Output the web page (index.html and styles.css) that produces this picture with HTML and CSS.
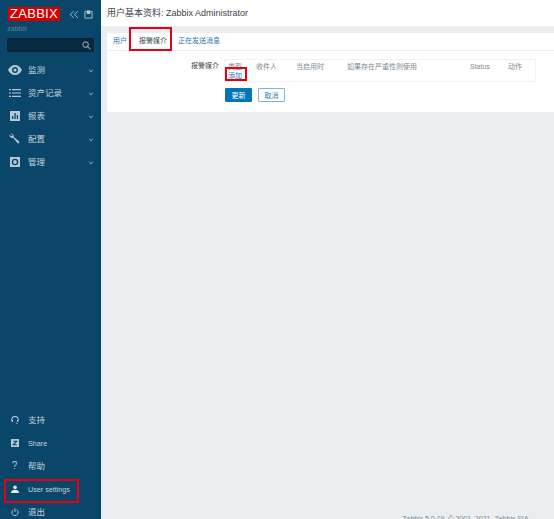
FILE: index.html
```html
<!DOCTYPE html>
<html lang="zh">

<head>
    <meta charset="UTF-8">
    <meta name="viewport" content="width=device-width, initial-scale=1.0">
    <title>用户基本资料</title>
    <link rel="stylesheet" href="styles.css">
</head>

<body>
    <aside class="sidebar">
        <div class="brand">
            <div class="logo">ZABBIX</div>
            <svg class="brand-icon" viewBox="0 0 12 10" width="10" height="9" fill="none" stroke="#b5c8d4" stroke-width="1.1">
                <path d="M5.5 1 1.5 5l4 4M10.5 1l-4 4 4 4" />
            </svg>
            <svg class="brand-icon" viewBox="0 0 10 10" width="9" height="9" fill="none" stroke="#b5c8d4" stroke-width="1">
                <path d="M3 1.5H1v7.5h8V1.5H7" />
                <path d="M3 .5h4v4H3z" fill="#b5c8d4" stroke="none" />
            </svg>
        </div>
        <div class="server">zabbix</div>
        <div class="search">
            <svg viewBox="0 0 10 10" width="9" height="9" fill="none" stroke="#8aa4b4" stroke-width="1.2">
                <circle cx="4" cy="4" r="3" />
                <path d="m6.2 6.2 3.2 3.2" />
            </svg>
        </div>

        <nav class="menu">
            <a class="item">
                <span class="icon-box">
                    <svg viewBox="0 0 14 10" width="14" height="10">
                        <path fill="#b5c8d4" fill-rule="evenodd" d="M7 0c3 0 5.5 2 7 5-1.500 3-4 5-7 5S1.500 8 0 5c1.500-3 4-5 7-5Zm0 2a3 3 0 1 0 0 6 3 3 0 0 0 0-6Z" />
                        <circle cx="7" cy="5" r="1.600" fill="#b5c8d4" />
                    </svg>
                </span>
                <span class="label">监测</span><span class="arrow"></span>
            </a>
            <a class="item">
                <span class="icon-box">
                    <svg viewBox="0 0 12 8" width="12" height="8" fill="#b5c8d4">
                        <path d="M0 0h2v1.200H0zM3 0h9v1.200H3zM0 3.400h2v1.200H0zM3 3.400h9v1.200H3zM0 6.800h2V8H0zM3 6.800h9V8H3z" />
                    </svg>
                </span>
                <span class="label">资产记录</span><span class="arrow"></span>
            </a>
            <a class="item">
                <span class="icon-box">
                    <svg viewBox="0 0 10 10" width="10" height="10">
                        <path fill="#b5c8d4" d="M0 0h10v10H0z" />
                        <path fill="#0a466a" d="M2 5h1.300v3H2zM4.400 2h1.300v6H4.400zM6.800 4h1.300v4H6.800z" />
                    </svg>
                </span>
                <span class="label">报表</span><span class="arrow"></span>
            </a>
            <a class="item">
                <span class="icon-box">
                    <svg viewBox="0 0 11 11" width="11" height="11">
                        <path fill="#b5c8d4" d="M1 .6a3 3 0 0 1 3.700 3.500l6 5-1.600 1.700-5-6A3 3 0 0 1 .4 1.500L2 3.200l1.300-.2.200-1.200Z" />
                    </svg>
                </span>
                <span class="label">配置</span><span class="arrow"></span>
            </a>
            <a class="item">
                <span class="icon-box">
                    <svg viewBox="0 0 10 10" width="10" height="10">
                        <path fill="#b5c8d4" d="M0 0h10v10H0z" />
                        <circle cx="5" cy="5" r="2.600" fill="none" stroke="#0a466a" stroke-width="1.400" />
                    </svg>
                </span>
                <span class="label">管理</span><span class="arrow"></span>
            </a>
        </nav>

        <nav class="menu menu-bottom">
            <a class="item">
                <span class="icon-box">
                    <svg viewBox="0 0 10 10" width="8" height="8" fill="none" stroke="#b5c8d4" stroke-width="1.400">
                        <path d="M1 6V4.500a4 4 0 0 1 8 0V6M6.500 9H8" />
                        <path d="M1 5h1.500v2.500H1zM7.500 5H9v2.500H7.500z" fill="#b5c8d4" stroke="none" />
                    </svg>
                </span>
                <span class="label">支持</span>
            </a>
            <a class="item">
                <span class="icon-box">
                    <svg viewBox="0 0 10 10" width="8" height="8">
                        <path fill="#b5c8d4" d="M0 0h10v10H0z" />
                        <path fill="none" stroke="#0a466a" stroke-width="1.300" d="M2.800 2.800h4.400L2.800 7.200h4.400" />
                    </svg>
                </span>
                <span class="label label-en">Share</span>
            </a>
            <a class="item">
                <span class="icon-box help">?</span>
                <span class="label">帮助</span>
            </a>
            <a class="item">
                <span class="icon-box">
                    <svg viewBox="0 0 10 10" width="8" height="8" fill="#dfe8ee">
                        <circle cx="5" cy="2.800" r="2.300" />
                        <path d="M0 10c0-3 2-4 5-4s5 1 5 4Z" />
                    </svg>
                </span>
                <span class="label label-en">User settings</span>
            </a>
            <a class="item">
                <span class="icon-box">
                    <svg viewBox="0 0 10 10" width="8" height="8" fill="none" stroke="#b5c8d4" stroke-width="1.200">
                        <path d="M3 2a4 4 0 1 0 4 0M5 .5v4.500" />
                    </svg>
                </span>
                <span class="label">退出</span>
            </a>
        </nav>
    </aside>

    <main class="main">
        <header class="header">
            <h1>用户基本资料: Zabbix Administrator</h1>
        </header>

        <section class="panel">
            <ul class="tabs">
                <li>用户</li>
                <li class="active">报警媒介</li>
                <li>正在发送消息</li>
            </ul>
            <div class="form">
                <div class="form-label">报警媒介</div>
                <div class="form-body">
                    <div class="media">
                        <div class="media-head">
                            <span class="col-type">类型</span>
                            <span class="col-to">收件人</span>
                            <span class="col-when">当启用时</span>
                            <span class="col-sev">如果存在严重性则使用</span>
                            <span class="col-status">Status</span>
                            <span>动作</span>
                        </div>
                        <a class="add">添加</a>
                    </div>
                    <div class="buttons">
                        <button class="btn btn-main">更新</button>
                        <button class="btn">取消</button>
                    </div>
                </div>
            </div>
        </section>

        <footer class="footer">Zabbix 5.0.19. © 2001–2021, Zabbix SIA</footer>
    </main>

    <!-- red marks drawn over the screenshot -->
    <div class="mark mark-tab"></div>
    <div class="mark mark-add"></div>
    <div class="mark mark-user"></div>
</body>

</html>
```

FILE: styles.css
```css
* {
    box-sizing: border-box;
}

html,
body {
    height: 519px;
    overflow: hidden;
}

body {
    margin: 0;
    display: flex;
    background-color: #ebeef0;
    font-family: "Liberation Sans", "Noto Sans CJK SC", sans-serif;
    color: #5f6b73;
}

.sidebar {
    width: 101px;
    height: 519px;
    flex-shrink: 0;
    display: flex;
    flex-direction: column;
    background-color: #0a466a;
    color: #c3d2dc;
}

.brand {
    display: flex;
    align-items: center;
    height: 14px;
    margin: 7px 0 0 8px;
}

.logo {
    width: 52px;
    height: 14px;
    margin-right: 9px;
    background-color: #d40000;
    color: #fff;
    font-size: 13px;
    line-height: 14px;
    text-align: center;
    letter-spacing: 0.3px;
}

.brand-icon {
    margin-right: 5px;
}

.server {
    margin: 3px 0 0 7px;
    height: 10px;
    font-size: 7px;
    line-height: 10px;
    color: #5f8299;
}

.search {
    display: flex;
    align-items: center;
    justify-content: flex-end;
    width: 87px;
    height: 14px;
    margin: 4px 0 0 7px;
    padding-right: 2px;
    background-color: #06293f;
    border: 1px solid #052236;
    border-radius: 2px;
}

.menu {
    margin-top: 6px;
}

.menu-bottom {
    margin-top: auto;
    margin-bottom: -4px;
}

.item {
    display: flex;
    align-items: center;
    height: 23px;
    padding-left: 5px;
    font-size: 8.5px;
}

.icon-box {
    display: flex;
    align-items: center;
    justify-content: center;
    width: 19px;
    margin-right: 4px;
    flex-shrink: 0;
}

.label {
    padding-bottom: 2px;
}

.label-en {
    padding-bottom: 0;
    padding-top: 1px;
    font-size: 7.2px;
}

.help {
    font-size: 10px;
    color: #b5c8d4;
}

.arrow {
    width: 4px;
    height: 4px;
    margin-left: auto;
    margin-right: 8px;
    border-right: 1px solid #8fa9b9;
    border-bottom: 1px solid #8fa9b9;
    transform: rotate(45deg) scale(0.8);
}

.main {
    flex: 1;
    min-width: 0;
    display: flex;
    flex-direction: column;
    height: 519px;
}

.header {
    height: 26px;
    padding-left: 6px;
    background-color: #fff;
}

h1 {
    margin: 0;
    font-size: 9px;
    font-weight: normal;
    line-height: 26px;
    color: #3c4449;
}

.panel {
    height: 79px;
    margin: 7px 0 0 6px;
    background-color: #fff;
}

.tabs {
    display: flex;
    height: 18px;
    margin: 0;
    padding: 0;
    list-style: none;
    border-bottom: 1px solid #ebeef0;
    font-size: 7px;
    line-height: 16px;
    color: #1f74a8;
}

.tabs li {
    padding: 0 6px;
}

.tabs .active {
    padding-right: 5px;
    color: #3c4449;
    border-bottom: 1px solid #0275b8;
    height: 18px;
}

.form {
    display: flex;
    padding-top: 8px;
    font-size: 7px;
}

.form-label {
    width: 112px;
    padding-top: 1px;
    text-align: right;
    color: #3c4449;
}

.form-body {
    margin-left: 5px;
}

.media {
    width: 312px;
    height: 23px;
    padding: 2px 3px;
    border: 1px solid #f0f2f3;
}

.media-head {
    display: flex;
    height: 9px;
    line-height: 9px;
    color: #7d8a92;
}

.col-type {
    width: 28px;
}

.col-to {
    width: 40px;
}

.col-when {
    width: 51px;
}

.col-sev {
    width: 123px;
}

.col-status {
    width: 38px;
}

.add {
    display: block;
    line-height: 9px;
    color: #1f74a8;
    text-decoration: underline;
}

.buttons {
    display: flex;
    gap: 6px;
    margin: 6px 0 0 1px;
}

.btn {
    width: 27px;
    height: 14px;
    padding: 0;
    background-color: #fff;
    border: 1px solid #7fb4d4;
    border-radius: 1px;
    font-family: inherit;
    font-size: 7px;
    color: #2f7fae;
}

.btn-main {
    background-color: #0275b8;
    border-color: #0275b8;
    color: #fff;
}

.footer {
    margin-top: auto;
    height: 4px;
    overflow: hidden;
    padding-left: 301px;
    font-size: 7px;
    line-height: 8px;
    color: #7d8a92;
}

.mark {
    position: absolute;
    border: 2px solid #e60012;
}

.mark-tab {
    left: 129px;
    top: 27px;
    width: 43px;
    height: 24px;
}

.mark-add {
    left: 225px;
    top: 67px;
    width: 22px;
    height: 14px;
}

.mark-user {
    left: 4px;
    top: 479px;
    width: 75px;
    height: 24px;
}
```
